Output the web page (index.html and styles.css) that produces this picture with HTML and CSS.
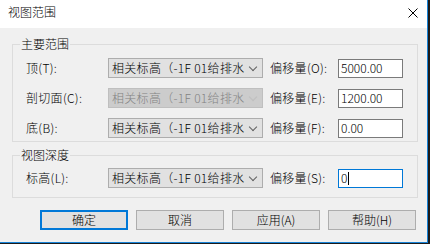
FILE: index.html
```html
<!DOCTYPE html>
<html lang="zh-CN">
<head>
  <meta charset="UTF-8">
  <title>视图范围</title>
  <link rel="stylesheet" href="styles.css">
</head>
<body>
  <div class="dialog">
    <div class="title-bar">
      <span class="title">视图范围</span>
      <svg class="close" width="10" height="10" viewBox="0 0 10 10">
        <path d="M0.5 0.5 L9.5 9.5 M9.5 0.5 L0.5 9.5" stroke="#000" stroke-width="1" fill="none"/>
      </svg>
    </div>

    <fieldset class="group main-range">
      <legend>主要范围</legend>
      <div class="row">
        <span class="label">顶(T):</span>
        <div class="combo"><span class="combo-text">相关标高（-1F 01给排水</span><span class="chevron"></span></div>
        <span class="label offset">偏移量(O):</span>
        <div class="input">5000.00</div>
      </div>
      <div class="row">
        <span class="label">剖切面(C):</span>
        <div class="combo disabled"><span class="combo-text">相关标高（-1F 01给排水</span><span class="chevron"></span></div>
        <span class="label offset">偏移量(E):</span>
        <div class="input">1200.00</div>
      </div>
      <div class="row">
        <span class="label">底(B):</span>
        <div class="combo"><span class="combo-text">相关标高（-1F 01给排水</span><span class="chevron"></span></div>
        <span class="label offset">偏移量(F):</span>
        <div class="input">0.00</div>
      </div>
    </fieldset>

    <fieldset class="group depth">
      <legend>视图深度</legend>
      <div class="row">
        <span class="label">标高(L):</span>
        <div class="combo"><span class="combo-text">相关标高（-1F 01给排水</span><span class="chevron"></span></div>
        <span class="label offset">偏移量(S):</span>
        <div class="input focused">0<span class="caret"></span></div>
      </div>
    </fieldset>

    <div class="buttons">
      <button class="default">确定</button>
      <button>取消</button>
      <button>应用(A)</button>
      <button>帮助(H)</button>
    </div>
  </div>
</body>
</html>
```

FILE: styles.css
```css
/* GENERAL */
body {
  margin: 0;
  background-color: #1b1b1b;
  font-family: "Noto Sans CJK SC", "Noto Sans", sans-serif;
  font-size: 12px;
  font-weight: 300;
  color: #000;
}

.dialog {
  width: 427px;
  height: 242px;
  background-color: #f0f0f0;
  border-right: 1px solid #1883d7;
  border-bottom: 1px solid #1883d7;
  display: flex;
  flex-direction: column;
}

.title-bar {
  height: 28px;
  background-color: #fff;
  display: flex;
  justify-content: space-between;
  align-items: flex-start;
  padding: 5px 9px 0 8px;
  box-sizing: border-box;
}

.title {
  line-height: 14px;
}

.close {
  margin-top: 3px;
}

/* GROUPS */
.group {
  margin: 9px 9px 0 12px;
  border: 1px solid #dcdcdc;
  padding: 7px 0 3px 13px;
  display: flex;
  flex-direction: column;
  gap: 10px;
}

.group legend {
  padding: 0 1px;
  margin-left: -6px;
  line-height: 14px;
}

.depth {
  margin-top: 6px;
  padding-top: 6px;
  padding-bottom: 9px;
}

.row {
  display: flex;
  align-items: center;
  height: 20px;
}

.label {
  width: 82px;
  line-height: 14px;
  white-space: nowrap;
  letter-spacing: 0.3px;
}

.label.offset {
  width: 68px;
  margin-left: 7px;
}

/* COMBO */
.combo {
  width: 155px;
  height: 20px;
  box-sizing: border-box;
  border: 1px solid #adadad;
  background-color: #e1e1e1;
  display: flex;
  align-items: center;
  padding-left: 3px;
}

.combo-text {
  flex: 1;
  white-space: nowrap;
  line-height: 16px;
  letter-spacing: 0.3px;
}

.chevron {
  width: 5px;
  height: 5px;
  border-right: 1px solid #606060;
  border-bottom: 1px solid #606060;
  transform: rotate(45deg);
  margin: 0 6px 3px 4px;
}

.combo.disabled {
  background-color: #cccccc;
  border-color: #bfbfbf;
  color: #838383;
}

.combo.disabled .chevron {
  border-color: #bfbfbf;
}

/* INPUT */
.input {
  width: 65px;
  height: 19px;
  box-sizing: border-box;
  border: 1px solid #7a7a7a;
  background-color: #fff;
  padding-left: 2px;
  line-height: 16px;
  display: flex;
  align-items: center;
}

.input.focused {
  border-color: #0078d7;
}

.caret {
  width: 0;
  height: 13px;
  border-left: 1px solid #000;
  margin-left: 1px;
}

/* BUTTONS */
.buttons {
  display: flex;
  gap: 8px;
  margin-top: 12px;
  padding-left: 40px;
}

button {
  width: 88px;
  height: 20px;
  border: 1px solid #adadad;
  background-color: #e1e1e1;
  font-family: inherit;
  font-size: 12px;
  font-weight: 300;
  color: #000;
  padding: 0;
  line-height: 16px;
}

button.default {
  border: 2px solid #0078d7;
}
```
